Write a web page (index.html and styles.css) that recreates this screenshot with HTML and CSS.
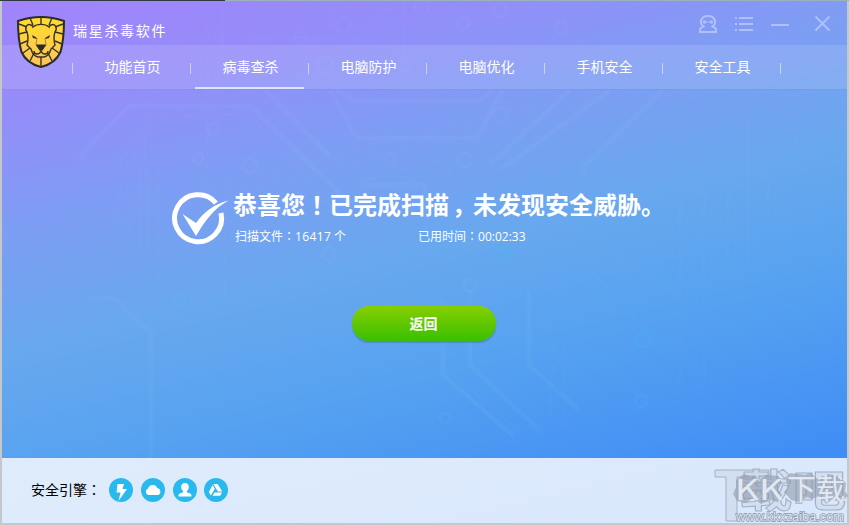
FILE: index.html
```
<!DOCTYPE html>
<html lang="zh-CN">
<head>
<meta charset="utf-8">
<title>瑞星杀毒软件</title>
<link rel="stylesheet" href="styles.css">
</head>
<body>
<div class="backdrop"></div>
<main class="window">
  <svg class="circuit" viewBox="2 1 845 457" aria-hidden="true">
    <g fill="none" stroke="#b9dcff" stroke-opacity=".055" stroke-width="5">
      <path d="M82 160V153L129 106H251L348 202H390M265 90l65 66M330 90l27 48h120l26-48M337 90l18 11h125l12-11M583 175v-8l80-77M500 170l110-80M490 165L570 90M360 185h65v35"/>
      <path d="M90 298h24l37 35v125M443 300v75l70 60M470 290v75l70 66M529 290v75l50 45"/>
    </g>
    <g fill="none" stroke="#d0e8ff" stroke-opacity=".04" stroke-width="1.5">
      <path d="M145 180V115H250l82 94M120 255v-93l20-32 18 32v120M130 262v-95l14-30M140 255v-90M148 250v-88M225 180v120M275 190l60 60M250 38h107l40-38M322 0l15 19M403 0v65M222 10v40M208 20v180"/>
      <path d="M680 175v240M704 180v240M728 140v120M748 120v160M768 90v140M797 92v75M400 160h46l6 18M450 372l70 60M457 386l65 60M550 340l15 35v50M565 345l-15 35v40M610 250l80 55M590 270l60 65"/>
    </g>
    <g fill="none" stroke="#c4e0ff" stroke-opacity=".05" stroke-width="3">
      <circle cx="343" cy="25" r="7"/><circle cx="301" cy="38" r="6"/><circle cx="422" cy="7" r="7"/><circle cx="463" cy="23" r="6"/><circle cx="500" cy="10" r="7"/><circle cx="561" cy="27" r="6"/>
      <circle cx="325" cy="65" r="8"/><circle cx="404" cy="65" r="6"/><circle cx="500" cy="115" r="7"/><circle cx="390" cy="160" r="6"/><circle cx="465" cy="160" r="7"/><circle cx="213" cy="129" r="6"/><circle cx="250" cy="166" r="7"/><circle cx="198" cy="159" r="5"/>
      <circle cx="502" cy="254" r="7" stroke="#50b5f4" stroke-opacity=".4" stroke-width="4"/><circle cx="180" cy="301" r="6" stroke="#60b7f2" stroke-opacity=".3"/><circle cx="643" cy="340" r="7" stroke="#48aef5" stroke-opacity=".4"/><circle cx="641" cy="401" r="6" stroke="#48aef5" stroke-opacity=".25"/><circle cx="445" cy="418" r="5"/><circle cx="329" cy="254" r="7"/><circle cx="470" cy="285" r="6"/>
    </g>
  </svg>

  <header class="header">
    <div class="titlebar">
      <h1 class="brand">瑞星杀毒软件</h1>
      <div class="controls">
        <svg width="20" height="20" viewBox="0 0 20 20"><path d="M2 18v-3l3-2.500C2.500 10 2.500 8.500 3 6.500 4 3.500 6.500 2 10 2s6 1.500 7 4.500c.5 2 .5 3.500-2 6l3 2.500v3Z"/><circle cx="6.500" cy="8" r=".7"/><circle cx="13.500" cy="8" r=".7"/><path d="M7 8h6M5 12.500h2M13 12.500h2" stroke-width="1"/></svg>
        <svg width="20" height="20" viewBox="0 0 20 20"><path d="M1 4h2m2 0h14M1 10h2m2 0h14M1 16h2m2 0h14"/></svg>
        <svg width="20" height="20" viewBox="0 0 20 20"><path d="M1 11h18"/></svg>
        <svg class="close" width="20" height="20" viewBox="0 0 20 20"><path d="M2.500 2.500l14 14M16.500 2.500l-14 14"/></svg>
      </div>
    </div>
    <nav class="nav">
      <a class="tab">功能首页</a>
      <a class="tab active">病毒查杀</a>
      <a class="tab">电脑防护</a>
      <a class="tab">电脑优化</a>
      <a class="tab">手机安全</a>
      <a class="tab">安全工具</a>
    </nav>
    <svg class="shield" width="50" height="54" viewBox="0 0 50 54">
      <defs><linearGradient id="gold" x2="0" y2="1"><stop stop-color="#ffdd2a"/><stop offset="1" stop-color="#fdc45c"/></linearGradient></defs>
      <path d="M2 6Q25-2 48 6C48 17 47 28 44.500 37 41 45 33 50 25 52 17 50 9 45 5.500 37 3 28 2 17 2 6Z" fill="url(#gold)" stroke="#2b2b2b" stroke-width="2"/>
      <g fill="none" stroke="#38322a" stroke-width="1.400">
        <path d="M11 17c-3-4 0-9 4-7q2 1 2 2c4-3.500 12-3.500 16 0q0-1 2-2c4-2 7 3 4 7q-2 6 0 13l-4 4q-2 7-7 8h-6q-5-1-7-8l-4-4q2-7 0-13Z"/>
        <path d="M25 2v7.500M14 3l3 7M36 3l-3 7M3 9l8 3M47 9l-8 3M3 19l8-2M47 19l-8-2M4 29l7-3M46 29l-7-3M7 38l7-5M43 38l-7-5M14 46l4-8M36 46l-4-8M25 42v10"/>
        <path d="M25 35v2M18 36q0 3 3 3 3 0 4-3 1 3 4 3 3 0 3-3"/>
      </g>
      <path d="M16 20l5 3v1l-4-1ZM34 20l-5 3v1l4-1ZM19.500 29.500h11l-4 6h-3Z" fill="#2b2b2b"/>
      <path d="M21 23l-1 7M29 23l1 7" fill="none" stroke="#b48529"/>
    </svg>
  </header>

  <section class="result">
    <div class="summary">
      <svg class="check" width="58" height="54" viewBox="0 0 58 54">
        <path d="M44 10A23.500 23.500 0 1 0 49 20" fill="none" stroke="#fff" stroke-width="5"/>
        <path d="M10.500 21 24 30C32 19 42 11 56.500 7.500 43 15 34 26 24 43Z" fill="#fff" stroke="#77a2f2" stroke-width="1" paint-order="stroke"/>
      </svg>
      <div>
        <h2 class="headline">恭喜您<span class="mid" lang="zh-TW">！</span>已完成扫描<span class="comma">，</span>未发现安全威胁。</h2>
        <div class="stats">
          <span class="files">扫描文件<span class="mid" lang="zh-TW">：</span><b>16417</b> 个</span>
          <span>已用时间<span class="mid" lang="zh-TW">：</span><b class="time">00:02:33</b></span>
        </div>
      </div>
    </div>
    <button class="back">返回</button>
  </section>

  <footer class="footer">
    <span class="engine-label">安全引擎<span class="mid" lang="zh-TW">：</span></span>
    <div class="engines">
      <svg viewBox="0 0 24 24"><circle cx="12" cy="12" r="12"/><path d="M8.500 6H15l-1.500 5H18L9.500 23l2-8.500h-4Z"/></svg>
      <svg viewBox="0 0 24 24"><circle cx="12" cy="12" r="12"/><path d="M7 17a3.500 3.500 0 0 1 0-6.500 5 5 0 0 1 9.300-.6A3.700 3.700 0 0 1 17 17Z"/></svg>
      <svg viewBox="0 0 24 24"><circle cx="12" cy="12" r="12"/><path d="M12 5c5 0 4.500 6 2 8v1.500c3 .5 5 1.500 4.500 4h-13c-.5-2.500 1.500-3.500 4.500-4V13C7.500 11 7 5 12 5Z"/></svg>
      <svg viewBox="0 0 24 24"><circle cx="12" cy="12" r="12"/><path d="M9.300 6h4.400l4.500 7.500h-4.300ZM8.600 7l2.200 3.800-4 6.700L4.900 14ZM10.500 14.500H18l-1.800 3.200H8.500Z"/></svg>
    </div>
  </footer>
</main>
<svg class="watermark" width="135" height="58" viewBox="714 467 135 58">
  <path d="M715 470h54v7h-32v44h-11V477h-11Z" fill="#cbd8ea" fill-opacity=".6" stroke="#a4b1c5"/>
  <text class="wm-outline" x="739" y="507" textLength="107" lengthAdjust="spacingAndGlyphs">载吧</text>
  <path d="M736 480l8-6 7 3 4-2 4 6 7-6 13 1 3 7-4 7 4 5-4 7-9-2-8 4-8-6-7 5-9-2-4-7 3-7ZM786 480l4-7 15 2 5-2 9 7 9-6 11 2 7 7-1 8 3 5-7 6-9-2-6 4-7-8-7 3-5-2-8 5-8-2-7-8 4-4Z" fill="#8f9bac" fill-opacity=".6"/>
  <text class="wm-main" x="735" y="500" textLength="48" lengthAdjust="spacingAndGlyphs">KK</text>
  <text class="wm-main" x="787" y="500" textLength="58" lengthAdjust="spacingAndGlyphs">下载</text>
  <text class="wm-url" x="736" y="521" textLength="108" lengthAdjust="spacingAndGlyphs">www.kkxzaiba.com</text>
</svg>
</body>
</html>
```
FILE: styles.css
```
* { box-sizing: border-box; }

body {
  position: relative;
  width: 849px;
  height: 525px;
  margin: 0;
  padding: 1px 2px 2px;
  overflow: hidden;
  background: #c5c8ca;
  font-family: "Noto Sans CJK SC", sans-serif;
  color: #fff;
}

.backdrop {
  position: absolute;
  inset: 0 0 auto;
  height: 1px;
  background: linear-gradient(90deg, #303a43 0 225px, #9ab2bc 225px);
}

.window {
  position: relative;
  display: flex;
  flex-direction: column;
  width: 845px;
  height: 522px;
  background: linear-gradient(166deg, #a283fb 0, #938ef9 18%, #7e9df4 34%, #68a8ee 53%, #57a2f0 71%, #3e8cf6 100%) 0 0 / 100% 457px no-repeat;
}

.circuit {
  position: absolute;
  inset: 0 auto auto 0;
  width: 845px;
  height: 457px;
}

.header { position: relative; height: 89px; }

.titlebar {
  display: flex;
  justify-content: space-between;
  height: 44px;
  padding: 0 14px 0 71px;
}

.brand {
  margin: 18px 0 0;
  font-size: 14px;
  line-height: 22px;
  font-weight: 400;
  letter-spacing: 1.7px;
}

.controls {
  display: flex;
  gap: 16px;
  padding-top: 13px;
}

.controls svg {
  fill: none;
  stroke: rgba(221, 229, 255, .5);
  stroke-width: 2;
}

.controls .close { margin-left: 7px; }

.nav {
  display: flex;
  height: 45px;
  padding-left: 70px;
  background: rgba(255, 255, 255, .12);
  border-bottom: 1px solid rgba(75, 105, 190, .25);
}

.tab {
  position: relative;
  width: 118px;
  padding-left: 3px;
  font-size: 14px;
  line-height: 43px;
  text-align: center;
  background: linear-gradient(rgba(255,255,255,.5), rgba(255,255,255,.5)) 0 18px / 1px 11px no-repeat;
}

.tab:last-child {
  width: 119px;
  padding-right: 1px;
  background-image: linear-gradient(rgba(255,255,255,.5), rgba(255,255,255,.5)), linear-gradient(rgba(255,255,255,.5), rgba(255,255,255,.5));
  background-position: 0 18px, 118px 18px;
}

.active::after {
  content: "";
  position: absolute;
  right: 4px;
  bottom: 0;
  width: 109px;
  height: 2px;
  background: #dce3ff;
}

.shield {
  position: absolute;
  left: 14px;
  top: 14px;
}

.result {
  position: relative;
  display: flex;
  flex-direction: column;
  align-items: center;
  height: 368px;
  padding: 96px 2px 0 0;
}

.summary {
  display: flex;
  align-self: flex-start;
  margin-left: 170px;
  gap: 3px;
  height: 72px;
}

.check { margin-top: 7px; overflow: visible; }

.headline {
  margin: 0;
  font-size: 24px;
  line-height: 36px;
  font-weight: 700;
  white-space: nowrap;
}

.mid { font-family: "Noto Sans CJK TC", sans-serif; }
.comma { padding-left: 3px; margin-right: -3px; }

.stats {
  display: flex;
  margin: 5px 0 0 2px;
  font-size: 12px;
  line-height: 18px;
}

.files { width: 183px; }

.stats b {
  font: 400 12px/18px "Open Sans", sans-serif;
  letter-spacing: .4px;
}

.stats .time { letter-spacing: 0; }

.back {
  width: 144px;
  height: 35px;
  margin-top: 48px;
  padding: 0;
  border: 0;
  border-radius: 17px;
  background: linear-gradient(#87cf00, #39bf02);
  box-shadow: 0 2px 1px rgba(60, 100, 170, .4);
  color: #fff;
  font: 700 14px/35px "Noto Sans CJK SC", sans-serif;
}

.footer {
  position: relative;
  display: flex;
  align-items: center;
  height: 65px;
  padding: 0 0 1px 29px;
  background: linear-gradient(166deg, #dfecfb, #d9e7fd);
  color: #000;
}

.engine-label { width: 78px; padding-bottom: 3px; font-size: 14px; }
.engines { display: flex; gap: 8px; }

.engines svg { width: 24px; height: 24px; fill: #fff; }
.engines svg:last-child { margin-left: -1px; }
.engines circle { fill: #29b9ee; }

.watermark {
  position: absolute;
  left: 714px;
  top: 467px;
  font-family: "Noto Sans CJK SC", sans-serif;
}

.wm-outline {
  font-size: 44px;
  font-weight: 700;
  fill: rgba(203, 216, 234, .6);
  stroke: #a4b1c5;
}

.wm-main { font-size: 29px; fill: #e2e9f3; }

.wm-url {
  font-family: "Liberation Sans", sans-serif;
  font-size: 13px;
  fill: #dbe5f2;
  stroke: #8f9bab;
  stroke-width: 1.5px;
  paint-order: stroke;
}
```
